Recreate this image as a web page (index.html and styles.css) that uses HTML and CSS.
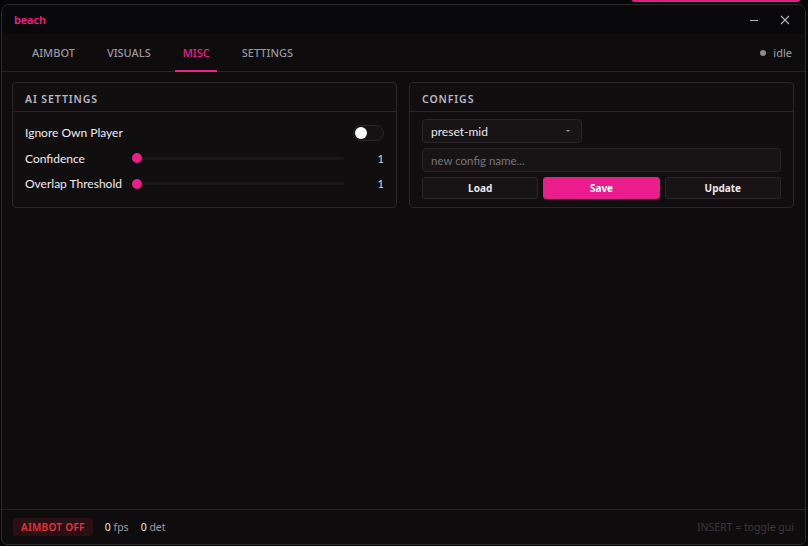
FILE: index.html
```html
<!DOCTYPE html>
<html>
<head>
<meta charset="utf-8">
<link rel="stylesheet" href="styles.css">
</head>
<body>
<div class="desk-accent"></div>
<div class="window">
  <div class="titlebar">
    <span class="brand">beach</span>
    <div class="win-controls">
      <svg class="wc" width="10" height="10" viewBox="0 0 10 10"><path d="M1 5.5H9" stroke="#b8b4ba" stroke-width="1"/></svg>
      <svg class="wc" width="10" height="10" viewBox="0 0 10 10"><path d="M1 1L9 9M9 1L1 9" stroke="#b8b4ba" stroke-width="1.1"/></svg>
    </div>
  </div>
  <div class="tabbar">
    <nav class="tabs">
      <span class="tab">AIMBOT</span>
      <span class="tab">VISUALS</span>
      <span class="tab active">MISC</span>
      <span class="tab">SETTINGS</span>
    </nav>
    <div class="status"><span class="dot"></span>idle</div>
  </div>
  <main class="content">
    <section class="panel">
      <div class="panel-head">AI SETTINGS</div>
      <div class="panel-body rows">
        <div class="row">
          <span class="label">Ignore Own Player</span>
          <span class="toggle"><span class="knob"></span></span>
        </div>
        <div class="row">
          <span class="label slabel">Confidence</span>
          <span class="slider"><span class="thumb"></span></span>
          <span class="val">1</span>
        </div>
        <div class="row">
          <span class="label slabel">Overlap Threshold</span>
          <span class="slider"><span class="thumb"></span></span>
          <span class="val">1</span>
        </div>
      </div>
    </section>
    <section class="panel">
      <div class="panel-head">CONFIGS</div>
      <div class="panel-body configs">
        <div class="select"><span>preset-mid</span><span class="caret"></span></div>
        <div class="input">new config name...</div>
        <div class="btns">
          <button class="btn">Load</button>
          <button class="btn primary">Save</button>
          <button class="btn">Update</button>
        </div>
      </div>
    </section>
  </main>
  <footer class="footer">
    <div class="foot-left">
      <span class="badge">AIMBOT OFF</span>
      <span class="stat"><b>0</b> fps</span>
      <span class="stat"><b>0</b> det</span>
    </div>
    <span class="hint">INSERT = toggle gui</span>
  </footer>
</div>
</body>
</html>
```
FILE: styles.css
```css
* { box-sizing: border-box; }
html, body { margin: 0; padding: 0; }
body {
  background: #060507;
  width: 808px;
  height: 546px;
  overflow: hidden;
  font-family: "Noto Sans", "Open Sans", sans-serif;
  color: #e6e2e8;
}
.desk-accent {
  height: 2px;
  margin-left: 632px;
  width: 168px;
  background: #e0207f;
  border-radius: 0 0 2px 2px;
}
.window {
  margin: 2px 0 0 1px;
  width: 805px;
  height: 541px;
  border: 1px solid #2c2a2e;
  border-radius: 8px 8px 6px 6px;
  background: #0f0c0e;
  display: flex;
  flex-direction: column;
  overflow: hidden;
}
.titlebar {
  height: 29px;
  background: #09080a;
  display: flex;
  align-items: center;
  justify-content: space-between;
  padding: 0 15px 0 12px;
  flex: none;
}
.brand {
  color: #f0208a;
  font-size: 11px;
  font-weight: 600;
  letter-spacing: -0.1px;
}
.win-controls { display: flex; gap: 21px; align-items: center; }
.wc { display: block; }
.tabbar {
  height: 38px;
  border-bottom: 1px solid #262226;
  display: flex;
  align-items: center;
  justify-content: space-between;
  padding: 0 13px 0 19px;
  flex: none;
}
.tabs { display: flex; height: 100%; gap: 0; }
.tab {
  font-size: 11px;
  font-weight: 500;
  color: #9b97a0;
  padding: 0 11px;
  display: flex;
  align-items: center;
  position: relative;
  height: 100%;
  margin-right: 10px;
}
.tab.active { color: #f0208a; }
.tab.active::after {
  content: "";
  position: absolute;
  left: 3px; right: 4px; bottom: -1px;
  height: 2px;
  background: #f0208a;
}
.status {
  display: flex;
  align-items: center;
  gap: 7px;
  font-size: 11px;
  color: #a6a0ab;
}
.dot { width: 6px; height: 6px; border-radius: 50%; background: #8d8891; }
.content {
  flex: 1;
  padding: 10px;
  display: grid;
  grid-template-columns: 385px 385px;
  column-gap: 12px;
  align-items: start;
}
.panel {
  border: 1px solid #2a2528;
  border-radius: 4px;
  background: #110e10;
}
.panel-head {
  height: 29px;
  border-bottom: 1px solid #2a2528;
  display: flex;
  align-items: center;
  padding: 3px 12px 0 12px;
  font-size: 10.5px;
  font-weight: 600;
  letter-spacing: 0.9px;
  color: #bcb6c0;
}
.rows { padding: 8px 12px 10px 12px; display: flex; flex-direction: column; }
.row {
  height: 25.5px;
  display: flex;
  align-items: center;
  font-family: Lato, "Noto Sans", sans-serif;
  font-size: 12px;
  color: #f0ecf2;
}
.label { flex: 1; }
.slabel { flex: none; width: 112px; }
.toggle {
  width: 31px; height: 16px;
  border-radius: 8px;
  background: #161214;
  border: 1px solid #2c272a;
  position: relative;
}
.knob {
  position: absolute; left: 1px; top: 1px;
  width: 12px; height: 12px; border-radius: 50%;
  background: #ffffff;
}
.slider {
  width: 207px;
  height: 3px;
  background: #1a1619;
  border-radius: 2px;
  position: relative;
}
.thumb {
  position: absolute; left: -5px; top: -3.5px;
  width: 10px; height: 10px; border-radius: 50%;
  background: #ec1e8a;
}
.val { flex: 1; text-align: right; font-size: 11px; color: #d8d4dc; padding-right: 0; }
.configs { padding: 7px 12px 8px 12px; display: flex; flex-direction: column; gap: 5px; }
.select {
  width: 160px; height: 24px;
  background: #181416;
  border: 1px solid #2a2528;
  border-radius: 4px;
  display: flex; align-items: center; justify-content: space-between;
  padding: 0 11px 0 8px;
  font-family: Lato, "Noto Sans", sans-serif;
  font-size: 12px; color: #ece8ee;
}
.caret {
  width: 0; height: 0;
  border-left: 2px solid transparent; border-right: 2px solid transparent;
  border-top: 2px solid #9a96a0;
}
.input {
  height: 24px;
  background: #181416;
  border: 1px solid #2a2528;
  border-radius: 4px;
  display: flex; align-items: center;
  padding: 0 8px;
  font-family: Lato, "Noto Sans", sans-serif;
  font-size: 11.5px; color: #7a7479;
}
.btns { display: grid; grid-template-columns: 1fr 1fr 1fr; gap: 5px; }
.btn {
  height: 22px;
  background: #181416;
  border: 1px solid #2a2528;
  border-radius: 3px;
  font-family: inherit;
  font-size: 10px; font-weight: 700;
  color: #ece8ee;
  padding: 0;
}
.btn.primary { background: #e91e8c; border-color: #e91e8c; color: #fff; }
.footer {
  height: 35px;
  border-top: 1px solid #262226;
  display: flex; align-items: center; justify-content: space-between;
  padding: 0 11px 0 11px;
  flex: none;
}
.foot-left { display: flex; align-items: center; gap: 12px; }
.badge {
  background: #2a1013;
  color: #e8323e;
  font-size: 10px; font-weight: 600;
  letter-spacing: 0.3px;
  padding: 0 8px;
  height: 18px;
  border-radius: 3px;
  display: flex; align-items: center;
}
.stat { font-size: 10.5px; color: #a09ba4; }
.stat b { font-weight: 400; color: #f0ead8; }
.hint { font-size: 10.5px; color: #3c373e; }
```
